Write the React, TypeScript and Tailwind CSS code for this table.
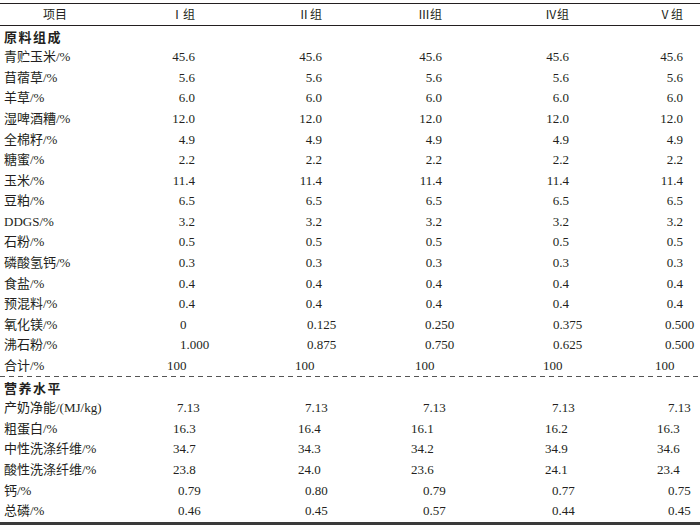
const serif = "font-['Liberation_Serif','Noto_Sans_CJK_SC',serif]";

type Layout = { pads: string[]; right?: boolean; box?: string };

// per-block cell offsets, measured from the reference (columns start at 160/285/405/535/650)
const A: Layout = { pads: ["pl-[11px]", "pl-[13px]", "pl-[13px]", "pl-[10px]", "pl-[9px]"], right: true, box: "w-[24px]" };
const B: Layout = { pads: ["pl-[20px]", "pl-[22px]", "pl-[20px]", "pl-[18px]", "pl-[15px]"] };
const C: Layout = { pads: ["pl-[7px]", "pl-[10px]", "pl-[10px]", "pl-[8px]", "pl-[5px]"] };
const D: Layout = { pads: ["pl-[17px]", "pl-[20px]", "pl-[18px]", "pl-[17px]", "pl-[18px]"] };
const E: Layout = { pads: ["pl-[13px]", "pl-[13px]", "pl-[6px]", "pl-[10px]", "pl-[7px]"] };
const F: Layout = { pads: ["pl-[18px]", "pl-[20px]", "pl-[18px]", "pl-[17px]", "pl-[18px]"] };
const H: Layout = { pads: ["pl-[3px]", "pl-[5px]", "pl-[5px]", "pl-[2px]", "pl-[1px]"], right: true, box: "w-[32px]" };

type Row =
  | { kind: "section"; label: string }
  | { kind: "data"; label: string; values: string[]; layout: Layout; dashed?: boolean };

const same = (v: string) => [v, v, v, v, v];

const rows: Row[] = [
  { kind: "section", label: "原料组成" },
  { kind: "data", label: "青贮玉米/%", values: same("45.6"), layout: A },
  { kind: "data", label: "苜蓿草/%", values: same("5.6"), layout: A },
  { kind: "data", label: "羊草/%", values: same("6.0"), layout: A },
  { kind: "data", label: "湿啤酒糟/%", values: same("12.0"), layout: A },
  { kind: "data", label: "全棉籽/%", values: same("4.9"), layout: A },
  { kind: "data", label: "糖蜜/%", values: same("2.2"), layout: A },
  { kind: "data", label: "玉米/%", values: same("11.4"), layout: A },
  { kind: "data", label: "豆粕/%", values: same("6.5"), layout: A },
  { kind: "data", label: "DDGS/%", values: same("3.2"), layout: A },
  { kind: "data", label: "石粉/%", values: same("0.5"), layout: A },
  { kind: "data", label: "磷酸氢钙/%", values: same("0.3"), layout: A },
  { kind: "data", label: "食盐/%", values: same("0.4"), layout: A },
  { kind: "data", label: "预混料/%", values: same("0.4"), layout: A },
  { kind: "data", label: "氧化镁/%", values: ["0", "0.125", "0.250", "0.375", "0.500"], layout: B },
  { kind: "data", label: "沸石粉/%", values: ["1.000", "0.875", "0.750", "0.625", "0.500"], layout: B },
  { kind: "data", label: "合计/%", values: same("100"), layout: C, dashed: true },
  { kind: "section", label: "营养水平" },
  { kind: "data", label: "产奶净能/(MJ/kg)", values: same("7.13"), layout: D },
  { kind: "data", label: "粗蛋白/%", values: ["16.3", "16.4", "16.1", "16.2", "16.3"], layout: E },
  { kind: "data", label: "中性洗涤纤维/%", values: ["34.7", "34.3", "34.2", "34.9", "34.6"], layout: E },
  { kind: "data", label: "酸性洗涤纤维/%", values: ["23.8", "24.0", "23.6", "24.1", "23.4"], layout: E },
  { kind: "data", label: "钙/%", values: ["0.79", "0.80", "0.79", "0.77", "0.75"], layout: F },
  { kind: "data", label: "总磷/%", values: ["0.46", "0.45", "0.57", "0.44", "0.45"], layout: F },
];

const grid = "grid grid-cols-[160px_125px_120px_130px_115px_1fr] items-center";

const Cell = ({ value, layout, i }: { value: string; layout: Layout; i: number }) => (
  <div className={layout.pads[i]}>
    {layout.right ? (
      <div className={`flex justify-end whitespace-nowrap ${layout.box}`}>{value}</div>
    ) : (
      <span className="whitespace-nowrap">{value}</span>
    )}
  </div>
);

export default function App() {
  return (
    <div className={`w-[700px] h-[526px] bg-white text-[#231f20] pt-[3px] ${serif}`}>
      <div className={`${grid} h-[23px] border-y-[1.5px] border-[#231f20] text-[12px]`}>
        <div className="pl-[43px] text-left">项目</div>
        {["Ⅰ组", "Ⅱ组", "Ⅲ组", "Ⅳ组", "Ⅴ组"].map((h, i) => (
          <Cell key={h} value={h} layout={H} i={i} />
        ))}
      </div>

      {rows.map((r, idx) =>
        r.kind === "section" ? (
          <div key={idx} className="h-[20.6px] flex items-center pl-[4px] text-[13px] font-bold tracking-[1.5px] font-['Noto_Sans_CJK_SC',sans-serif]">
            {r.label}
          </div>
        ) : (
          <div key={idx}>
            <div className={`${grid} h-[20.6px] text-[13px]`}>
              <div className="pl-[4px] whitespace-nowrap">{r.label}</div>
              {r.values.map((v, i) => (
                <Cell key={i} value={v} layout={r.layout} i={i} />
              ))}
            </div>
            {r.dashed && (
              <div className="h-px bg-[linear-gradient(to_right,#555_5px,transparent_5px)] bg-[length:9px_1px]" />
            )}
          </div>
        )
      )}

      <div className="mt-[1px] h-[3px] bg-[#3a3a3a]" />
    </div>
  );
}
